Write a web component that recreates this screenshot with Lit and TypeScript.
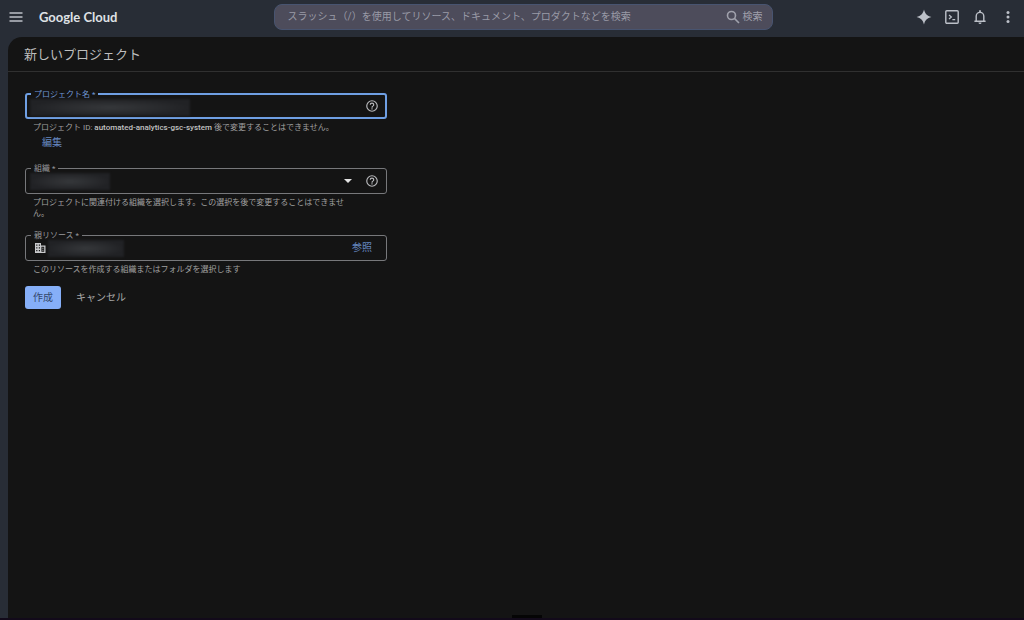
import { LitElement, html, css } from "lit";
import { customElement } from "lit/decorators.js";

const helpIcon = html`<svg viewBox="0 0 24 24" width="14" height="14" fill="currentColor" aria-hidden="true"><path d="M11 18h2v-2h-2v2zm1-16a10 10 0 1 0 0 20 10 10 0 0 0 0-20zm0 18a8 8 0 1 1 0-16 8 8 0 0 1 0 16zm0-14a4 4 0 0 0-4 4h2a2 2 0 1 1 4 0c0 2-3 1.750-3 5h2c0-2.250 3-2.500 3-5a4 4 0 0 0-4-4z"/></svg>`;

@customElement("app-header")
class AppHeader extends LitElement {
  static styles = css`
    :host {
      display: block;
      color: #bcc0c8;
    }
    .bar {
      display: grid;
      grid-template-columns: 12fr minmax(200px, 499px) 11fr;
      align-items: center;
      height: 37px;
      padding: 0 8px 3px;
      box-sizing: border-box;
    }
    button {
      display: grid;
      place-items: center;
      width: 16px;
      height: 16px;
      padding: 0;
      border: 0;
      background: none;
      color: inherit;
      font: inherit;
    }
    .start,
    .end {
      display: flex;
      align-items: center;
    }
    .start {
      gap: 15px;
    }
    .end {
      justify-content: flex-end;
      gap: 12px;
    }
    .brand {
      color: #dfe1e5;
      font: 700 13px/18px "Lato", sans-serif;
      text-decoration: none;
      white-space: nowrap;
    }
    .search {
      display: flex;
      align-items: center;
      height: 26px;
      box-sizing: border-box;
      padding: 0 9px 0 13px;
      border: 1px solid #485470;
      border-radius: 8px;
      background: #4d4c5b;
      color: #a0a1ac;
    }
    .search input {
      flex: 1;
      min-width: 0;
      padding: 0;
      border: 0;
      outline: 0;
      background: none;
      color: inherit;
      font: inherit;
    }
    .search input::placeholder {
      color: #9a9ba7;
      opacity: 1;
    }
    .search .go {
      display: flex;
      align-items: center;
      gap: 3px;
      width: auto;
    }
  `;

  render() {
    return html`
      <header class="bar">
        <div class="start">
          <button aria-label="メニュー">
            <svg viewBox="0 0 16 16" width="16" height="16" fill="none" stroke="currentColor" stroke-width="1.400"><path d="M1.500 4h13M1.500 8h13M1.500 12h13"/></svg>
          </button>
          <a class="brand" href="#">Google Cloud</a>
        </div>
        <form class="search" role="search">
          <input type="text" aria-label="検索" placeholder="スラッシュ（/）を使用してリソース、ドキュメント、プロダクトなどを検索" />
          <button class="go" type="button">
            <svg viewBox="0 0 14 14" width="14" height="14" fill="none" stroke="currentColor" stroke-width="1.600"><circle cx="5.500" cy="5.500" r="4"/><path d="M8.400 8.400l4.600 4.600"/></svg>
            <span>検索</span>
          </button>
        </form>
        <div class="end">
          <button aria-label="Gemini">
            <svg viewBox="0 0 16 16" width="16" height="16" fill="currentColor"><path d="M8 .6C9 4.800 11.200 7 15.400 8 11.200 9 9 11.200 8 15.400 7 11.200 4.800 9 .6 8 4.800 7 7 4.800 8 .6z"/></svg>
          </button>
          <button aria-label="Cloud Shell">
            <svg viewBox="0 0 16 16" width="16" height="16" fill="none" stroke="currentColor" stroke-width="1.400"><rect x="1.800" y="1.800" width="12.400" height="12.400" rx="1"/><path d="M5 6l2.400 2L5 10M8.400 10.600h2.800" stroke-width="1.200"/></svg>
          </button>
          <button aria-label="通知">
            <svg viewBox="0 0 16 16" width="16" height="16" fill="none" stroke="currentColor" stroke-width="1.400"><path d="M2.400 12.300h11.200M4.200 12V7.200a3.800 3.800 0 0 1 7.600 0V12"/><path d="M8 1.200v2" stroke-width="1.800"/><path d="M6.500 13.600h3a1.500 1.500 0 0 1-3 0z" fill="currentColor" stroke="none"/></svg>
          </button>
          <button aria-label="その他">
            <svg viewBox="0 0 16 16" width="16" height="16" fill="currentColor"><circle cx="8" cy="3.500" r="1.500"/><circle cx="8" cy="8" r="1.500"/><circle cx="8" cy="12.500" r="1.500"/></svg>
          </button>
        </div>
      </header>
    `;
  }
}

@customElement("app-root")
class AppRoot extends LitElement {
  static styles = css`
    :host {
      position: relative;
      display: flex;
      flex-direction: column;
      min-height: 100vh;
      box-sizing: border-box;
      border-bottom: 2px solid #120a1a;
      background: #282d36;
      color: #a9a9a9;
      font: 10px/14px "Roboto", "Noto Sans CJK JP", sans-serif;
    }
    main {
      flex: 1;
      margin-left: 8px;
      border-radius: 14px 0 0 0;
      background: #141414;
    }
    h1 {
      margin: 0;
      padding: 8px 16px 7px;
      border-bottom: 1px solid #303030;
      color: #bebebe;
      font-size: 13px;
      font-weight: 400;
      line-height: 19px;
    }
    .form {
      display: flex;
      flex-direction: column;
      gap: 16px;
      max-width: 362px;
      padding: 21px 17px 0;
    }
    .box {
      position: relative;
      display: flex;
      align-items: center;
      height: 26px;
      box-sizing: border-box;
      border: 1px solid #77787b;
      border-radius: 3px;
      padding: 0 7px 0 8px;
    }
    .box.focused {
      border: 2px solid #6f9fe3;
      padding: 0 6px 0 7px;
    }
    .label {
      position: absolute;
      top: -6px;
      left: 5px;
      padding: 0 3px;
      background: #141414;
      color: #98999c;
      font-size: 8px;
      line-height: 11px;
    }
    .focused .label {
      left: 4px;
      color: #7199d4;
    }
    .control {
      flex: 1;
      min-width: 0;
      height: 20px;
      padding: 0;
      border: 0;
      outline: 0;
      appearance: none;
      background: none;
      color: #d0d0d0;
      font: inherit;
    }
    .mask {
      position: absolute;
      top: 4px;
      left: 4px;
      height: 17px;
      background: radial-gradient(closest-side, #36383b, #212225);
      filter: blur(1px);
    }
    .wide {
      left: 3px;
      width: 160px;
    }
    .medium {
      width: 80px;
    }
    .inset {
      left: 22px;
      width: 76px;
    }
    .help,
    .link,
    .actions button {
      padding: 0;
      border: 0;
      background: none;
      color: inherit;
      font: inherit;
    }
    .help {
      display: grid;
      place-items: center;
      color: #b9babd;
    }
    .caret {
      margin-right: 13px;
      fill: #e4e4e4;
    }
    .building {
      flex: none;
      color: #c8c9cb;
    }
    .link {
      color: #6688c0;
      text-decoration: none;
    }
    .browse {
      margin-right: 7px;
    }
    .edit {
      display: inline-block;
      margin: 3px 0 2px 17px;
    }
    .hint {
      max-width: 318px;
      margin: 3px 8px 0;
      color: #a0a0a0;
      font-size: 8px;
      line-height: 11px;
    }
    .hint strong {
      color: #c2c2c2;
      font-weight: 500;
    }
    .actions {
      display: flex;
      gap: 15px;
      margin-top: -5px;
    }
    .actions .create {
      height: 23px;
      padding: 0 8px;
      border-radius: 3px;
      background: #86aff8;
      color: #34486d;
    }
    .grip {
      position: absolute;
      bottom: 0;
      left: 50%;
      width: 30px;
      height: 3px;
      background: #050505;
    }
  `;

  render() {
    return html`
      <app-header></app-header>
      <main>
        <h1>新しいプロジェクト</h1>
        <form class="form">
          <div>
            <div class="box focused">
              <label class="label" for="name">プロジェクト名 *</label>
              <input class="control" id="name" type="text" />
              <span class="mask wide"></span>
              <button class="help" type="button" aria-label="ヘルプ">${helpIcon}</button>
            </div>
            <p class="hint">プロジェクト ID: <strong>automated-analytics-gsc-system</strong> 後で変更することはできません。</p>
            <a class="link edit" href="#">編集</a>
          </div>
          <div>
            <div class="box">
              <label class="label" for="org">組織 *</label>
              <select class="control" id="org"><option></option></select>
              <span class="mask medium"></span>
              <svg class="caret" viewBox="0 0 8 4" width="8" height="4" aria-hidden="true"><path d="M0 0h8L4 4z"/></svg>
              <button class="help" type="button" aria-label="ヘルプ">${helpIcon}</button>
            </div>
            <p class="hint">プロジェクトに関連付ける組織を選択します。この選択を後で変更することはできません。</p>
          </div>
          <div>
            <div class="box">
              <label class="label" for="parent">親リソース *</label>
              <svg class="building" viewBox="0 0 12 12" width="12" height="12" aria-hidden="true"><path d="M1 1h6v2.500h4.500V11H1z" fill="currentColor"/><path d="M2.200 2.500h1.200v1.200H2.200zM4.800 2.500H6v1.200H4.800zM2.200 5.200h1.200v1.200H2.200zM4.800 5.200H6v1.200H4.800zM2.200 8h1.200v1.200H2.200zM4.800 8H6v1.200H4.800zM7.400 4.800h2.800v5H7.400z" fill="#141414"/><path d="M8.400 5.800h1v1h-1zM8.400 7.800h1v1h-1z" fill="currentColor"/></svg>
              <input class="control" id="parent" type="text" />
              <span class="mask inset"></span>
              <button class="link browse" type="button">参照</button>
            </div>
            <p class="hint">このリソースを作成する組織またはフォルダを選択します</p>
          </div>
          <div class="actions">
            <button class="create" type="button">作成</button>
            <button type="button">キャンセル</button>
          </div>
        </form>
      </main>
      <span class="grip"></span>
    `;
  }
}
